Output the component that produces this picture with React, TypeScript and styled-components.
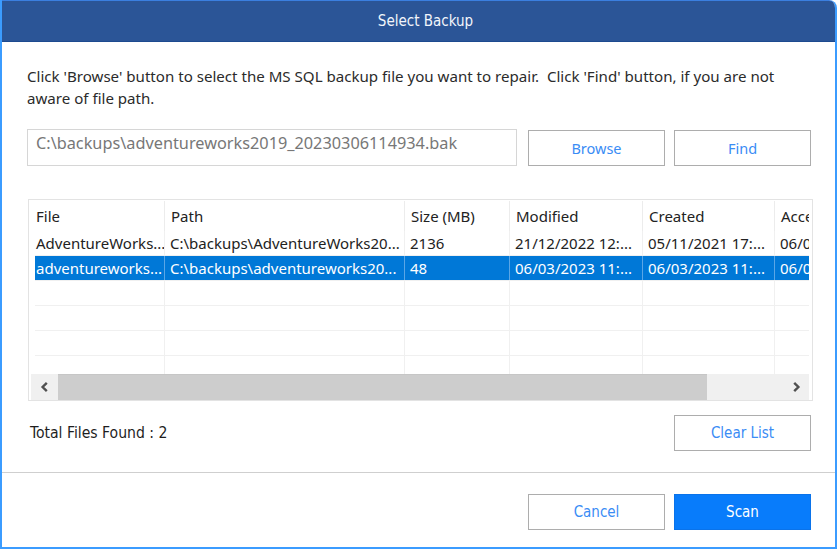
import styled, { createGlobalStyle } from 'styled-components'

const GlobalStyle = createGlobalStyle`
    html, body {
        margin: 0;
        padding: 0;
        background: #ffffff;
    }
    * {
        box-sizing: border-box;
    }
`

const columns = [
    { title: 'File', width: 135 },
    { title: 'Path', width: 240 },
    { title: 'Size (MB)', width: 105 },
    { title: 'Modified', width: 133 },
    { title: 'Created', width: 132 },
    { title: 'Accessed', width: 120 },
]

const rows = [
    ['AdventureWorks...', 'C:\\backups\\AdventureWorks20...', '2136', '21/12/2022 12:...', '05/11/2021 17:...', '06/03/2023 11:...'],
    ['adventureworks...', 'C:\\backups\\adventureworks20...', '48', '06/03/2023 11:...', '06/03/2023 11:...', '06/03/2023 11:...'],
]

const EMPTY_ROWS = 4

export default function App() {
    return (
        <>
            <GlobalStyle />
            <Window>
                <TitleBar>Select Backup</TitleBar>

                <Body>
                    <Intro>
                        Click 'Browse' button to select the MS SQL backup file you want to repair.&nbsp; Click 'Find' button, if you are not
                        <br />
                        aware of file path.
                    </Intro>

                    <PathRow>
                        <PathInput>C:\backups\adventureworks2019_20230306114934.bak</PathInput>
                        <OutlineButton>Browse</OutlineButton>
                        <OutlineButton>Find</OutlineButton>
                    </PathRow>

                    <TableBox>
                        <Grid>
                            <HeaderRow>
                                {columns.map((c) => (
                                    <HeaderCell key={c.title} style={{ width: c.width }}>
                                        {c.title}
                                    </HeaderCell>
                                ))}
                            </HeaderRow>

                            {rows.map((r, i) => (
                                <Row key={i} $selected={i === 1}>
                                    {r.map((v, j) => (
                                        <Cell key={j} style={{ width: columns[j].width }} $selected={i === 1}>
                                            {v}
                                        </Cell>
                                    ))}
                                </Row>
                            ))}

                            {Array.from({ length: EMPTY_ROWS }).map((_, i) => (
                                <Row key={'e' + i} $last={i === EMPTY_ROWS - 1}>
                                    {columns.map((c) => (
                                        <Cell key={c.title} style={{ width: c.width }} />
                                    ))}
                                </Row>
                            ))}
                        </Grid>

                        <ScrollBar>
                            <ArrowBox>
                                <ChevronSvg viewBox='0 0 10 10'>
                                    <path d='M6.5 1.5 L3 5 L6.5 8.5' />
                                </ChevronSvg>
                            </ArrowBox>
                            <Thumb />
                            <Track />
                            <ArrowBox>
                                <ChevronSvg viewBox='0 0 10 10'>
                                    <path d='M3.5 1.5 L7 5 L3.5 8.5' />
                                </ChevronSvg>
                            </ArrowBox>
                        </ScrollBar>
                    </TableBox>

                    <CountRow>
                        <CountText>Total Files Found : 2</CountText>
                        <OutlineButton $narrow>Clear List</OutlineButton>
                    </CountRow>
                </Body>

                <Footer>
                    <OutlineButton $narrow>Cancel</OutlineButton>
                    <PrimaryButton>Scan</PrimaryButton>
                </Footer>
            </Window>
        </>
    )
}

const Window = styled.div`
    width: 837px;
    height: 549px;
    display: flex;
    flex-direction: column;
    border-left: 2px solid #3b9cff;
    border-right: 2px solid #3b9cff;
    border-bottom: 2px solid #3b9cff;
    border-top-right-radius: 8px;
    overflow: hidden;
    background: #ffffff;
`

const TitleBar = styled.div`
    height: 42px;
    flex-shrink: 0;
    margin: 0 -2px;
    display: flex;
    align-items: center;
    justify-content: center;
    background: #2b5597;
    border-top: 1px solid #3b7fe0;
    border-bottom: 1px solid #1d4a8f;
    border-top-right-radius: 8px;
    color: #f2f5fb;
    font-family: 'Liberation Sans Narrow', 'DejaVu Sans Condensed', 'Noto Sans', sans-serif;
    font-size: 15px;
    padding-left: 14px;
`

const Body = styled.div`
    padding: 23px 24px 0 25px;
    font-family: 'Noto Sans', sans-serif;
`

const Intro = styled.p`
    margin: 0;
    font-size: 15.1px;
    line-height: 22px;
    color: #2b2b2b;
    white-space: nowrap;
`

const PathRow = styled.div`
    display: flex;
    align-items: center;
    gap: 9px;
    margin-top: 20px;
`

const PathInput = styled.div`
    width: 490px;
    height: 37px;
    margin-right: 2px;
    border: 1px solid #d6d6d6;
    padding: 2px 8px 0;
    font-size: 16.3px;
    color: #777777;
    white-space: nowrap;
`

const OutlineButton = styled.button<{ $narrow?: boolean }>`
    width: 137px;
    height: 36px;
    border: 1px solid #adadad;
    background: #ffffff;
    color: #3a8cf5;
    font-family: ${(p) =>
        p.$narrow ? "'Liberation Sans Narrow', 'DejaVu Sans Condensed', 'Noto Sans', sans-serif" : "'Noto Sans', sans-serif"};
    font-size: ${(p) => (p.$narrow ? '15px' : '14.5px')};
    padding: 0;
    cursor: pointer;
`

const PrimaryButton = styled.button`
    width: 137px;
    height: 36px;
    border: 1px solid #0a73ea;
    background: #087cfb;
    color: #ffffff;
    font-family: 'Liberation Sans Narrow', 'DejaVu Sans Condensed', 'Noto Sans', sans-serif;
    font-size: 15px;
    padding: 0;
    cursor: pointer;
`

const TableBox = styled.div`
    margin-top: 33px;
    width: 785px;
    margin-left: 1px;
    border: 1px solid #e3e3e3;
    padding: 1px 3px 0 1px;
    overflow: hidden;
`

const Grid = styled.div`
    display: flex;
    flex-direction: column;
    overflow: hidden;
`

const HeaderRow = styled.div`
    display: flex;
    height: 30px;
    white-space: nowrap;
`

const HeaderCell = styled.div`
    flex-shrink: 0;
    height: 100%;
    display: flex;
    align-items: center;
    padding-left: 6px;
    font-size: 15px;
    color: #222222;
    border-right: 1px solid #ececec;
`

const Row = styled.div<{ $selected?: boolean; $last?: boolean }>`
    display: flex;
    height: ${(p) => (p.$last ? '18px' : '25px')};
    margin-left: 5px;
    border-bottom: ${(p) => (p.$last ? 'none' : '1px solid #f0f0f0')};
    background: ${(p) => (p.$selected ? '#0078d7' : 'transparent')};
    white-space: nowrap;
`

const Cell = styled.div<{ $selected?: boolean }>`
    flex-shrink: 0;
    display: flex;
    align-items: center;
    padding-left: 5px;
    font-size: 15px;
    color: ${(p) => (p.$selected ? '#ffffff' : '#222222')};
    border-right: 1px solid ${(p) => (p.$selected ? '#5aa6e6' : '#f0f0f0')};
    overflow: hidden;
    &:first-child {
        margin-left: -5px;
        padding-left: 6px;
    }
`

const ScrollBar = styled.div`
    display: flex;
    height: 26px;
    margin-left: 1px;
    background: #f0f0f0;
`

const ArrowBox = styled.div`
    width: 27px;
    display: flex;
    align-items: center;
    justify-content: center;
    flex-shrink: 0;
`

const ChevronSvg = styled.svg`
    width: 12px;
    height: 12px;
    fill: none;
    stroke: #505050;
    stroke-width: 2;
`

const Thumb = styled.div`
    width: 649px;
    background: #cdcdcd;
    border-top: 1px solid #c6c6c6;
`

const Track = styled.div`
    flex: 1;
`

const CountRow = styled.div`
    display: flex;
    align-items: center;
    justify-content: space-between;
    margin-top: 14px;
    padding-left: 3px;
`

const CountText = styled.span`
    font-family: 'Liberation Sans Narrow', 'DejaVu Sans Condensed', 'Noto Sans', sans-serif;
    font-size: 15.6px;
    color: #1e1e1e;
`

const Footer = styled.div`
    margin-top: 21px;
    border-top: 1px solid #cfcfcf;
    display: flex;
    justify-content: flex-end;
    gap: 9px;
    padding: 21px 24px 0 0;
`
